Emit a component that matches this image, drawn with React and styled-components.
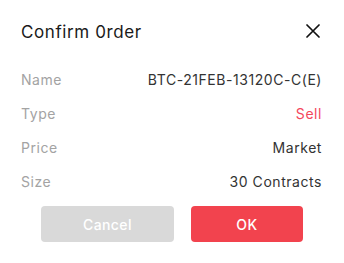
import styled, { createGlobalStyle } from 'styled-components'

const GlobalStyle = createGlobalStyle`
  html, body {
    margin: 0;
    padding: 0;
    background: #fff;
  }
  body {
    font-family: Inter, "Noto Sans", sans-serif;
  }
`

const Dialog = styled.div`
  width: 344px;
  height: 263px;
  box-sizing: border-box;
  padding: 0 22px 0 21px;
  background: #fff;
`

const Header = styled.div`
  height: 62px;
  display: flex;
  align-items: center;
  justify-content: space-between;
`

const Title = styled.h2`
  margin: 0;
  font-size: 17px;
  font-weight: 400;
  letter-spacing: 0.6px;
  color: #1a1a1a;
  padding-top: 2px;
`

const CloseButton = styled.button`
  width: 16px;
  height: 16px;
  padding: 0;
  margin-right: 1px;
  border: none;
  background: none;
  display: flex;
  align-items: center;
  justify-content: center;
  cursor: pointer;
`

const Row = styled.div`
  height: 34px;
  display: flex;
  align-items: center;
  justify-content: space-between;
  font-size: 14px;
  letter-spacing: 0.55px;
`

const Label = styled.span`
  color: #a3a3a3;
`

const Value = styled.span`
  color: ${({ $tone }) => ($tone === 'sell' ? '#f4475c' : '#333')};
`

const Actions = styled.div`
  display: flex;
  gap: 17px;
  margin: 8px 19px 0 20px;
`

const Button = styled.button`
  flex: ${({ $primary }) => ($primary ? 111 : 134)} 1 0;
  height: 36px;
  border: none;
  border-radius: 4px;
  font-family: inherit;
  font-size: 14px;
  font-weight: 500;
  letter-spacing: 0.4px;
  color: #fff;
  background: ${({ $primary }) => ($primary ? '#f2434e' : '#d9d9d9')};
  cursor: pointer;
`

const rows = [
  { label: 'Name', value: 'BTC-21FEB-13120C-C(E)' },
  { label: 'Type', value: 'Sell', tone: 'sell' },
  { label: 'Price', value: 'Market' },
  { label: 'Size', value: '30 Contracts' },
]

const App = () => {
  return (
    <>
      <GlobalStyle />
      <Dialog>
        <Header>
          <Title>Confirm 0rder</Title>
          <CloseButton aria-label="close">
            <svg width="14" height="14" viewBox="0 0 14 14">
              <path d="M1 1 L13 13 M13 1 L1 13" stroke="#111" strokeWidth="1.7" strokeLinecap="round" />
            </svg>
          </CloseButton>
        </Header>
        {rows.map((r) => (
          <Row key={r.label}>
            <Label>{r.label}</Label>
            <Value $tone={r.tone}>{r.value}</Value>
          </Row>
        ))}
        <Actions>
          <Button>Cancel</Button>
          <Button $primary>OK</Button>
        </Actions>
      </Dialog>
    </>
  )
}

export default App
